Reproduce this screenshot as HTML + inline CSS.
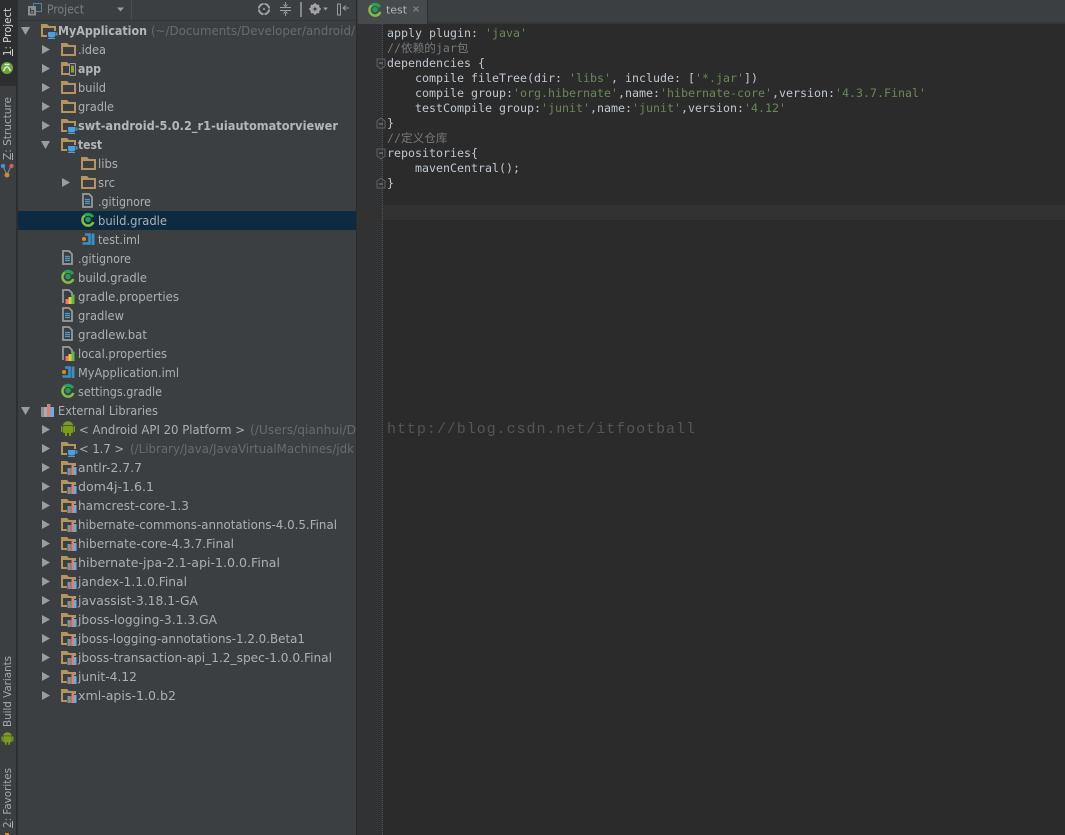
<!DOCTYPE html>
<html><head><meta charset="utf-8"><title>test</title>
<style>
html,body{margin:0;padding:0;background:#3c3f41;width:1065px;height:835px;overflow:hidden}
svg{display:block}
.t{font-family:"DejaVu Sans","Liberation Sans",sans-serif;font-size:12px;fill:#adafb1}
.b{font-weight:bold;fill:#b4b6b8}
.h{fill:#686b6d}
.v{font-family:"DejaVu Sans","Liberation Sans",sans-serif;font-size:11px;fill:#a8aaac}
.c{font-family:"DejaVu Sans Mono","Noto Sans CJK SC",monospace;font-size:11.63px;fill:#bfc7d0;white-space:pre}
.s{fill:#6a8759}
.m{fill:#77797b}
</style></head><body>
<svg xmlns="http://www.w3.org/2000/svg" width="1065" height="835" viewBox="0 0 1065 835">
<defs>
<g id="fd"><path fill-rule="evenodd" d="M0 0h6l2 2h7v11H0zM2 4v7h11V4z" fill="#b4945f"/></g>
<g id="cup"><rect x="-1" y="-1" width="11" height="8.500" fill="#3c3f41"/><path d="M0 0h7v3.500q0 2-2 2H2q-2 0-2-2z" fill="#4c9fd8"/><path d="M7 1h2v2H7" fill="none" stroke="#4c9fd8"/><path d="M0 6.500h7" stroke="#4c9fd8"/></g>
<g id="lib"><use href="#fd"/><rect x="6" y="5" width="10" height="9" fill="#3c3f41"/><rect x="6.500" y="7" width="3" height="7" fill="#8d8f91"/><rect x="9.500" y="7" width="1" height="7" fill="#6f7173"/><rect x="10.500" y="4" width="2.500" height="10" fill="#d0837f"/><rect x="13" y="6" width="2.500" height="8" fill="#6fabd6"/></g>
<g id="ar"><path d="M0 0l8 4.500-8 4.500z" fill="#9a9da0"/></g>
<g id="dn"><path d="M0 0h9l-4.500 8z" fill="#9a9da0"/></g>
<g id="fl"><path d="M1 1h6l3 3v10H1z" fill="none" stroke="#9a9da0" stroke-width="1.700"/><path d="M3 6.500h5M3 8.500h5M3 10.500h5" stroke="#4a9bd4" stroke-width="1.200"/></g>
<g id="pr"><path d="M1 14V1h6l3 3v3" fill="none" stroke="#9a9da0" stroke-width="1.700"/><rect x="3.500" y="10" width="3" height="5" fill="#e8776c"/><rect x="6.500" y="8" width="3" height="7" fill="#e8c33c"/><rect x="9.500" y="5.500" width="3" height="9.500" fill="#5fb84a"/></g>
<g id="gr"><path d="M11.800 4A5.600 5.600 0 1 0 12.300 9" fill="none" stroke="#86b84a" stroke-width="2.600"/><path d="M3.500 2.200A5.600 5.600 0 0 1 11.800 4" fill="none" stroke="#23a05c" stroke-width="2.600"/><circle cx="7" cy="6.500" r="2.800" fill="#1f9e55"/></g>
<g id="im"><path d="M3 1.500h4.500v9H0.500" fill="none" stroke="#3b8fc4" stroke-width="2.600"/><rect x="9.500" y="0.500" width="3" height="11.500" fill="#3b8fc4"/><circle cx="2" cy="6" r="2" fill="#e08a22"/></g>
<g id="an"><rect x="2" y="5" width="10" height="7" rx="1" fill="#7c9c1e"/><path d="M2 4.300a5 4 0 0 1 10 0z" fill="#7c9c1e"/><rect x="0" y="5" width="1.500" height="6" rx=".7" fill="#7c9c1e"/><rect x="12.500" y="5" width="1.500" height="6" rx=".7" fill="#7c9c1e"/><rect x="4" y="11" width="2" height="4" fill="#7c9c1e"/><rect x="8" y="11" width="2" height="4" fill="#7c9c1e"/></g>
<g id="fo"><path d="M-4 -5h8v7l-4 3-4-3z" fill="none" stroke="#5f6163"/><path d="M-2 -1h4" stroke="#8a8c8e"/></g>
<g id="fc"><path d="M-4 5h8v-7l-4-3-4 3z" fill="none" stroke="#5f6163"/><path d="M-2 1h4" stroke="#8a8c8e"/></g>
</defs>

<!-- base -->
<rect width="1065" height="835" fill="#3c3f41"/>
<rect x="0" y="0" width="16" height="86" fill="#2c2e2f"/>
<rect x="16" y="0" width="2" height="835" fill="#2d2e2f"/>

<!-- project header -->
<rect x="18" y="20" width="339" height="1" fill="#323436"/>
<rect x="131" y="0" width="1" height="20" fill="#4a4d4f"/>
<rect x="33.500" y="3.500" width="8" height="8" fill="#3c3f41" stroke="#4a85ad"/>
<rect x="28" y="6" width="8" height="9.500" fill="#8b8e90"/>
<path d="M30.500 8v5h3v-2.500h-3" fill="none" stroke="#3c3f41"/>
<text class="t" x="47" y="13.500" textLength="37" lengthAdjust="spacingAndGlyphs" style="fill:#7b7e80">Project</text>
<path d="M117 7.500h7l-3.500 4z" fill="#9a9da0"/>
<circle cx="264" cy="9" r="5.200" fill="none" stroke="#a2a4a6" stroke-width="1.900"/>
<path d="M264 2v3M264 13v3M257 9h3M268 9h3" stroke="#3c3f41" stroke-width="1"/><circle cx="264" cy="9" r="1" fill="#a2a4a6"/>
<path d="M280 7.500h11M280 10.500h11M285.500 2v3M285.500 13v3" stroke="#9a9da0"/>
<path d="M283.500 4.500l2 2 2-2M283.500 13.500l2-2 2 2" fill="none" stroke="#9a9da0"/>
<rect x="300" y="2" width="2" height="15" fill="#85888a"/>
<circle cx="315" cy="9" r="3.800" fill="none" stroke="#a2a4a6" stroke-width="2.400"/>
<path d="M315 3v12M309 9h12M311 5l8 8M319 5l-8 8" stroke="#a2a4a6" stroke-width="1.500"/><circle cx="315" cy="9" r="1.500" fill="#3c3f41"/>
<path d="M323 7.500h5l-2.500 3z" fill="#9a9da0"/>
<rect x="337.500" y="4" width="3" height="11" fill="none" stroke="#9a9da0"/>
<path d="M349 8h-6M346 5.500l-3 2.500 3 2.500" fill="none" stroke="#9a9da0"/>

<!-- selection -->
<rect x="18" y="211" width="338" height="19" fill="#0c2a40"/>

<!-- arrows -->
<use href="#dn" x="21" y="27"/>
<use href="#ar" x="42" y="45"/><use href="#ar" x="42" y="64"/><use href="#ar" x="42" y="83"/><use href="#ar" x="42" y="102"/><use href="#ar" x="42" y="121"/>
<use href="#dn" x="41" y="141"/>
<use href="#ar" x="62" y="178"/>
<use href="#dn" x="21" y="407"/>
<use href="#ar" x="42" y="425"/><use href="#ar" x="42" y="444"/><use href="#ar" x="42" y="463"/><use href="#ar" x="42" y="482"/><use href="#ar" x="42" y="501"/><use href="#ar" x="42" y="520"/><use href="#ar" x="42" y="539"/><use href="#ar" x="42" y="558"/><use href="#ar" x="42" y="577"/><use href="#ar" x="42" y="596"/><use href="#ar" x="42" y="615"/><use href="#ar" x="42" y="634"/><use href="#ar" x="42" y="653"/><use href="#ar" x="42" y="672"/><use href="#ar" x="42" y="691"/>

<!-- icons -->
<use href="#fd" x="41" y="24"/><use href="#cup" x="48" y="32"/>
<use href="#fd" x="61" y="43"/>
<use href="#fd" x="61" y="62"/><rect x="69.500" y="63.500" width="6" height="12" rx="1" fill="#3c3f41" stroke="#9a9da0"/><rect x="71" y="65.500" width="3" height="7" fill="#8aa52a"/>
<use href="#fd" x="61" y="81"/>
<use href="#fd" x="61" y="100"/>
<use href="#fd" x="61" y="119"/><use href="#cup" x="68" y="127"/>
<use href="#fd" x="61" y="138"/><use href="#cup" x="68" y="146"/>
<use href="#fd" x="81" y="157"/>
<use href="#fd" x="81" y="176"/>
<use href="#fl" x="82" y="193"/>
<use href="#gr" x="81" y="213"/>
<use href="#im" x="82" y="233"/>
<use href="#fl" x="62" y="250"/>
<use href="#gr" x="61" y="270"/>
<use href="#pr" x="62" y="289"/>
<use href="#fl" x="62" y="307"/>
<use href="#fl" x="62" y="326"/>
<use href="#pr" x="62" y="346"/>
<use href="#im" x="62" y="366"/>
<use href="#gr" x="61" y="384"/>
<g transform="translate(41,404)"><rect x="0" y="3" width="3" height="10" fill="#8d8f91"/><rect x="3" y="3" width="3" height="10" fill="#a9abad"/><rect x="6" y="0" width="3.500" height="13" fill="#d0837f"/><rect x="9.500" y="3" width="3.500" height="10" fill="#6fabd6"/></g>
<use href="#an" x="61" y="421"/>
<use href="#fd" x="61" y="442"/><use href="#cup" x="68" y="450"/>
<use href="#lib" x="61" y="461"/><use href="#lib" x="61" y="480"/><use href="#lib" x="61" y="499"/><use href="#lib" x="61" y="518"/><use href="#lib" x="61" y="537"/><use href="#lib" x="61" y="556"/><use href="#lib" x="61" y="575"/><use href="#lib" x="61" y="594"/><use href="#lib" x="61" y="613"/><use href="#lib" x="61" y="632"/><use href="#lib" x="61" y="651"/><use href="#lib" x="61" y="670"/><use href="#lib" x="61" y="689"/>

<!-- tree text -->
<text class="t b" x="58" y="35" textLength="89" lengthAdjust="spacingAndGlyphs">MyApplication</text>
<text class="t h" x="151" y="35" textLength="204" lengthAdjust="spacingAndGlyphs">(~/Documents/Developer/android/</text>
<text class="t" x="78" y="54" textLength="28" lengthAdjust="spacingAndGlyphs">.idea</text>
<text class="t b" x="78" y="73" textLength="23" lengthAdjust="spacingAndGlyphs">app</text>
<text class="t" x="78" y="92" textLength="28" lengthAdjust="spacingAndGlyphs">build</text>
<text class="t" x="78" y="111" textLength="36" lengthAdjust="spacingAndGlyphs">gradle</text>
<text class="t b" x="78" y="130" textLength="260" lengthAdjust="spacingAndGlyphs">swt-android-5.0.2_r1-uiautomatorviewer</text>
<text class="t b" x="78" y="149" textLength="24" lengthAdjust="spacingAndGlyphs">test</text>
<text class="t" x="98" y="168" textLength="20" lengthAdjust="spacingAndGlyphs">libs</text>
<text class="t" x="98" y="187" textLength="17" lengthAdjust="spacingAndGlyphs">src</text>
<text class="t" x="98" y="206" textLength="53" lengthAdjust="spacingAndGlyphs">.gitignore</text>
<text class="t" x="98" y="225" textLength="69" lengthAdjust="spacingAndGlyphs">build.gradle</text>
<text class="t" x="98" y="244" textLength="42" lengthAdjust="spacingAndGlyphs">test.iml</text>
<text class="t" x="78" y="263" textLength="53" lengthAdjust="spacingAndGlyphs">.gitignore</text>
<text class="t" x="78" y="282" textLength="69" lengthAdjust="spacingAndGlyphs">build.gradle</text>
<text class="t" x="78" y="301" textLength="101" lengthAdjust="spacingAndGlyphs">gradle.properties</text>
<text class="t" x="78" y="320" textLength="46" lengthAdjust="spacingAndGlyphs">gradlew</text>
<text class="t" x="78" y="339" textLength="69" lengthAdjust="spacingAndGlyphs">gradlew.bat</text>
<text class="t" x="78" y="358" textLength="89" lengthAdjust="spacingAndGlyphs">local.properties</text>
<text class="t" x="78" y="377" textLength="101" lengthAdjust="spacingAndGlyphs">MyApplication.iml</text>
<text class="t" x="78" y="396" textLength="84" lengthAdjust="spacingAndGlyphs">settings.gradle</text>
<text class="t" x="58" y="415" textLength="100" lengthAdjust="spacingAndGlyphs">External Libraries</text>
<text class="t" x="79" y="434" textLength="166" lengthAdjust="spacingAndGlyphs">&lt; Android API 20 Platform &gt;</text>
<text class="t h" x="250" y="434" textLength="106" lengthAdjust="spacingAndGlyphs">(/Users/qianhui/D</text>
<text class="t" x="79" y="453" textLength="45" lengthAdjust="spacingAndGlyphs">&lt; 1.7 &gt;</text>
<text class="t h" x="130" y="453" textLength="224" lengthAdjust="spacingAndGlyphs">(/Library/Java/JavaVirtualMachines/jdk</text>
<text class="t" x="78" y="472" textLength="64" lengthAdjust="spacingAndGlyphs">antlr-2.7.7</text>
<text class="t" x="78" y="491" textLength="76" lengthAdjust="spacingAndGlyphs">dom4j-1.6.1</text>
<text class="t" x="78" y="510" textLength="111" lengthAdjust="spacingAndGlyphs">hamcrest-core-1.3</text>
<text class="t" x="78" y="529" textLength="259" lengthAdjust="spacingAndGlyphs">hibernate-commons-annotations-4.0.5.Final</text>
<text class="t" x="78" y="548" textLength="156" lengthAdjust="spacingAndGlyphs">hibernate-core-4.3.7.Final</text>
<text class="t" x="78" y="567" textLength="202" lengthAdjust="spacingAndGlyphs">hibernate-jpa-2.1-api-1.0.0.Final</text>
<text class="t" x="78" y="586" textLength="109" lengthAdjust="spacingAndGlyphs">jandex-1.1.0.Final</text>
<text class="t" x="78" y="605" textLength="120" lengthAdjust="spacingAndGlyphs">javassist-3.18.1-GA</text>
<text class="t" x="78" y="624" textLength="139" lengthAdjust="spacingAndGlyphs">jboss-logging-3.1.3.GA</text>
<text class="t" x="78" y="643" textLength="227" lengthAdjust="spacingAndGlyphs">jboss-logging-annotations-1.2.0.Beta1</text>
<text class="t" x="78" y="662" textLength="254" lengthAdjust="spacingAndGlyphs">jboss-transaction-api_1.2_spec-1.0.0.Final</text>
<text class="t" x="78" y="681" textLength="59" lengthAdjust="spacingAndGlyphs">junit-4.12</text>
<text class="t" x="78" y="700" textLength="98" lengthAdjust="spacingAndGlyphs">xml-apis-1.0.b2</text>

<!-- left stripe -->
<text class="v" transform="translate(11,56) rotate(-90)" textLength="48" lengthAdjust="spacingAndGlyphs" style="fill:#d4d6d8">1: Project</text>
<rect x="12" y="49" width="1" height="7" fill="#d4d6d8"/>
<circle cx="7" cy="68" r="6" fill="#6ca53b"/>
<path d="M3.500 71l1.500-3a2.500 2.500 0 0 1 4 0l1.500 3M4.500 64.500l5 0" fill="none" stroke="#dfe8d8" stroke-width="1.500"/>
<text class="v" transform="translate(11,160) rotate(-90)" textLength="63" lengthAdjust="spacingAndGlyphs">Z: Structure</text>
<rect x="12" y="153" width="1" height="7" fill="#a8aaac"/>
<path d="M3 166l4 9 4-9" fill="none" stroke="#8a8c8e"/><circle cx="3" cy="166" r="2.200" fill="#4c8fc8"/><circle cx="11.500" cy="166" r="2.200" fill="#cf5f5a"/><circle cx="7" cy="175" r="2.500" fill="#c98a3c"/>
<text class="v" transform="translate(11,727) rotate(-90)" textLength="71" lengthAdjust="spacingAndGlyphs">Build Variants</text>
<g transform="translate(1.500,732) scale(.85)"><use href="#an"/></g>
<text class="v" transform="translate(11,828) rotate(-90)" textLength="60" lengthAdjust="spacingAndGlyphs">2: Favorites</text>
<rect x="12" y="821" width="1" height="7" fill="#a8aaac"/>
<rect x="5" y="833" width="4" height="2" fill="#c98a3c"/>

<!-- editor -->
<rect x="356" y="0" width="1" height="835" fill="#2b2c2d"/>
<rect x="357" y="24" width="708" height="811" fill="#2b2b2b"/>
<rect x="357" y="24" width="25" height="811" fill="#303234"/>
<rect x="357" y="205" width="708" height="15" fill="#323232"/>
<line x1="382.500" y1="24" x2="382.500" y2="835" stroke="#54565a" stroke-dasharray="1 1"/>

<!-- tabs -->
<rect x="357" y="0" width="708" height="24" fill="#3c3f41"/>
<rect x="357" y="22" width="708" height="2" fill="#333536"/>
<rect x="358" y="0" width="69" height="24" fill="#474a4c"/>
<rect x="427" y="0" width="1" height="23" fill="#2d2e2f"/>
<g transform="translate(368,3)"><use href="#gr"/></g>
<text class="t" x="386" y="13.500" textLength="21" lengthAdjust="spacingAndGlyphs" style="font-size:11px;fill:#b4b6b8">test</text>
<path d="M413.500 6.500l5 5M418.500 6.500l-5 5" stroke="#77797b" stroke-width="1.500"/>

<!-- fold markers -->
<use href="#fo" x="381" y="64"/>
<use href="#fc" x="381" y="123"/>
<use href="#fo" x="381" y="154"/>
<use href="#fc" x="381" y="183"/>

<!-- code -->
<text class="c" x="387" y="37">apply plugin: <tspan class="s">'java'</tspan></text>
<text class="c m" x="387" y="52">//依赖的jar包</text>
<text class="c" x="387" y="67">dependencies {</text>
<text class="c" x="415" y="82">compile fileTree(dir: <tspan class="s">'libs'</tspan>, include: [<tspan class="s">'*.jar'</tspan>])</text>
<text class="c" x="415" y="97">compile group:<tspan class="s">'org.hibernate'</tspan>,name:<tspan class="s">'hibernate-core'</tspan>,version:<tspan class="s">'4.3.7.Final'</tspan></text>
<text class="c" x="415" y="112">testCompile group:<tspan class="s">'junit'</tspan>,name:<tspan class="s">'junit'</tspan>,version:<tspan class="s">'4.12'</tspan></text>
<text class="c" x="387" y="127">}</text>
<text class="c m" x="387" y="142">//定义仓库</text>
<text class="c" x="387" y="157">repositories{</text>
<text class="c" x="415" y="172">mavenCentral();</text>
<text class="c" x="387" y="187">}</text>

<!-- watermark -->
<text x="387" y="433" textLength="308" lengthAdjust="spacing" style="font-family:'Liberation Mono',monospace;font-size:15px;fill:#555553">http://blog.csdn.net/itfootball</text>
</svg>
</body></html>
